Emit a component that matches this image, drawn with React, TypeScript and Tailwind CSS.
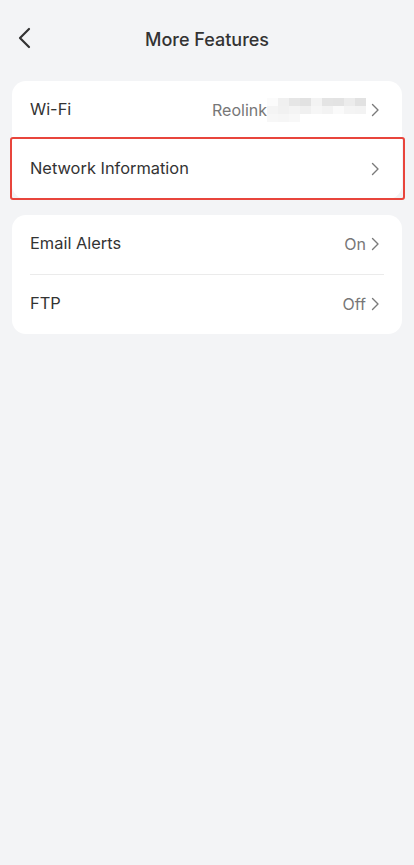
import React from 'react';

function Chevron() {
  return (
    <svg width="9" height="14" viewBox="0 0 9 14" fill="none" className="shrink-0">
      <path d="M1.5 1.5 L7 7 L1.5 12.5" stroke="#7a7a7a" strokeWidth="1.4" strokeLinecap="round" strokeLinejoin="round" />
    </svg>
  );
}

// pixelated privacy mosaic after the Wi-Fi name
const mosaic = [
  ['#fbfbfb', '#f0f0f0', '#e6e6e6', '#e2e2e2', '#f3f3f3', '#e4e4e4', '#e3e3e3', '#ececec', '#e2e2e2'],
  ['#f4f4f4', '#f1f1f1', '#f4f4f4', '#f0f0f0', '#f6f6f6', '#f3f3f3', '#fafafa', '#f4f4f4', '#f3f3f3'],
  ['#f7f7f7', '#f6f6f6', '#f8f8f8', '#ffffff', '#ffffff', '#ffffff', '#ffffff', '#ffffff', '#ffffff'],
];

function Row({ label, value, children }: { label: string; value?: React.ReactNode; children?: React.ReactNode }) {
  return (
    <div className="relative flex h-[59px] items-center justify-between pb-[2px] pl-[18px] pr-[22px]">
      <span className="text-[16.4px] text-[#333333]">{label}</span>
      <div className="flex items-center gap-[5px]">
        {value && <span className="text-[16px] text-[#777777]">{value}</span>}
        <Chevron />
      </div>
      {children}
    </div>
  );
}

export default function App() {
  return (
    <div className="min-h-[865px] w-full bg-[#f3f4f6]" style={{ fontFamily: 'Inter, "Noto Sans", sans-serif' }}>
      {/* Header */}
      <div className="relative flex h-[78px] items-center justify-center">
        <button className="absolute left-[16px] top-[27px] p-0">
          <svg width="18" height="22" viewBox="0 0 18 22" fill="none">
            <path d="M13 2 L4 11 L13 20" stroke="#333333" strokeWidth="2.2" strokeLinecap="round" strokeLinejoin="round" />
          </svg>
        </button>
        <h1 className="text-[18px] font-medium text-[#333333]">More Features</h1>
      </div>

      <div className="flex flex-col gap-[16px] px-[12px] pt-[3px]">
        {/* Card 1 */}
        <div className="rounded-[14px] bg-white">
          <div className="flex h-[59px] items-center justify-between pb-[2px] pl-[18px] pr-[22px]">
            <span className="text-[16.4px] text-[#333333]">Wi-Fi</span>
            <div className="flex items-center gap-[5px]">
              <div className="flex items-center">
                <span className="text-[16px] text-[#777777]">Reolink</span>
                <div className="flex flex-col">
                  {mosaic.map((r, i) => (
                    <div key={i} className="flex">
                      {r.map((c, j) => (
                        <div key={j} className="h-[8px] w-[11px]" style={{ backgroundColor: c }} />
                      ))}
                    </div>
                  ))}
                </div>
              </div>
              <Chevron />
            </div>
          </div>
          <Row label="Network Information">
            <div className="pointer-events-none absolute -left-[2px] -right-[3px] -top-[3px] bottom-[-1px] rounded-[3px] border-2 border-[#e8453c]" />
          </Row>
        </div>

        {/* Card 2 */}
        <div className="rounded-[14px] bg-white">
          <Row label="Email Alerts" value="On" />
          <div className="mx-[18px] h-px bg-[#ebebeb]" />
          <Row label="FTP" value="Off" />
        </div>
      </div>
    </div>
  );
}
